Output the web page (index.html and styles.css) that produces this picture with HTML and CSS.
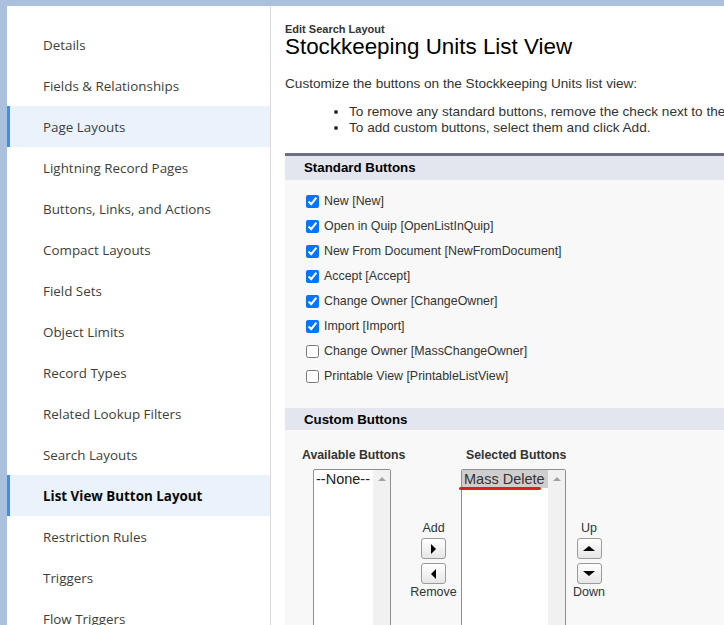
FILE: index.html
```html
<!DOCTYPE html>
<html lang="en">
<head>
    <meta charset="UTF-8">
    <title>Stockkeeping Units List View</title>
    <link rel="stylesheet" href="styles.css">
</head>
<body>
    <div class="app">
        <nav class="sidebar">
            <div class="nav-item">Details</div>
            <div class="nav-item">Fields &amp; Relationships</div>
            <div class="nav-item hover">Page Layouts</div>
            <div class="nav-item">Lightning Record Pages</div>
            <div class="nav-item">Buttons, Links, and Actions</div>
            <div class="nav-item">Compact Layouts</div>
            <div class="nav-item">Field Sets</div>
            <div class="nav-item">Object Limits</div>
            <div class="nav-item">Record Types</div>
            <div class="nav-item">Related Lookup Filters</div>
            <div class="nav-item">Search Layouts</div>
            <div class="nav-item active">List View Button Layout</div>
            <div class="nav-item">Restriction Rules</div>
            <div class="nav-item">Triggers</div>
            <div class="nav-item">Flow Triggers</div>
        </nav>

        <main class="content">
            <div class="page-type">Edit Search Layout</div>
            <h1 class="page-title">Stockkeeping Units List View</h1>
            <p class="intro">Customize the buttons on the Stockkeeping Units list view:</p>
            <ul class="hints">
                <li>To remove any standard buttons, remove the check next to the button.</li>
                <li>To add custom buttons, select them and click Add.</li>
            </ul>

            <section class="block">
                <h2 class="block-head">Standard Buttons</h2>
                <div class="block-body checks">
                    <label class="check"><input type="checkbox" checked> New [New]</label>
                    <label class="check"><input type="checkbox" checked> Open in Quip [OpenListInQuip]</label>
                    <label class="check"><input type="checkbox" checked> New From Document [NewFromDocument]</label>
                    <label class="check"><input type="checkbox" checked> Accept [Accept]</label>
                    <label class="check"><input type="checkbox" checked> Change Owner [ChangeOwner]</label>
                    <label class="check"><input type="checkbox" checked> Import [Import]</label>
                    <label class="check"><input type="checkbox"> Change Owner [MassChangeOwner]</label>
                    <label class="check"><input type="checkbox"> Printable View [PrintableListView]</label>
                </div>

                <h2 class="block-head custom">Custom Buttons</h2>
                <div class="block-body dual">
                    <div class="col col-available">
                        <div class="col-label">Available Buttons</div>
                        <div class="listbox">
                            <div class="options">
                                <div class="option">--None--</div>
                            </div>
                            <div class="scroll"><span class="scroll-up"></span></div>
                        </div>
                    </div>

                    <div class="col col-move">
                        <div class="btn-label">Add</div>
                        <div class="arrow-btn"><span class="tri right"></span></div>
                        <div class="arrow-btn"><span class="tri left"></span></div>
                        <div class="btn-label">Remove</div>
                    </div>

                    <div class="col col-selected">
                        <div class="col-label">Selected Buttons</div>
                        <div class="listbox wide">
                            <div class="options">
                                <div class="option selected">Mass Delete</div>
                            </div>
                            <div class="scroll"><span class="scroll-up"></span></div>
                            <span class="mark"></span>
                        </div>
                    </div>

                    <div class="col col-order">
                        <div class="btn-label">Up</div>
                        <div class="arrow-btn"><span class="tri up"></span></div>
                        <div class="arrow-btn"><span class="tri down"></span></div>
                        <div class="btn-label">Down</div>
                    </div>
                </div>
            </section>
        </main>
    </div>
</body>
</html>
```

FILE: styles.css
```css
html, body {
    height: 100%;
}

body {
    margin: 0;
    padding: 6px 0 0 7px;
    box-sizing: border-box;
    overflow: hidden;
    background: #aac0dc;
    font-family: 'Liberation Sans', Arial, sans-serif;
    color: #000;
}

.app {
    display: flex;
    height: 100%;
}

/* left navigation */
.sidebar {
    width: 263px;
    flex: none;
    padding-top: 18px;
    background: #fff;
    border-right: 1px solid #dddbda;
    font-family: 'Open Sans', 'Noto Sans', sans-serif;
    font-size: 13.4px;
    color: #3e3e3c;
}

.nav-item {
    height: 40px;
    padding: 1px 0 0 36px;
    line-height: 41px;
    white-space: nowrap;
}

.nav-item.hover,
.nav-item.active {
    background: #eaf2fc;
    box-shadow: inset 3px 0 0 #3d8eef;
}

.nav-item.active {
    font-weight: bold;
    color: #080707;
}

/* main panel */
.content {
    flex: 1;
    min-width: 0;
    overflow: hidden;
    background: #fff;
    padding: 17px 0 0 14px;
    font-size: 13.6px;
}

.page-type {
    font-size: 11px;
    font-weight: bold;
    line-height: 13px;
    color: #333;
}

.page-title {
    margin: 0;
    font-size: 22.4px;
    font-weight: normal;
    line-height: 22px;
    white-space: nowrap;
}

.intro {
    margin: 18px 0 0;
    line-height: 16px;
    color: #333;
}

.hints {
    margin: 12px 0 0;
    padding-left: 64px;
    line-height: 16px;
    color: #333;
    white-space: nowrap;
}

.block {
    margin-top: 17px;
    border-top: 3px solid #6b7085;
    background: #f8f8f8;
    width: 470px;
}

.block-head {
    margin: 0;
    height: 24px;
    line-height: 23px;
    padding-left: 19px;
    background: #e3e6ee;
    font-size: 13.3px;
    font-weight: bold;
}

.block-head.custom {
    height: 22px;
    line-height: 23px;
}

.checks {
    padding: 9px 0 19px 20px;
}

.check {
    display: flex;
    align-items: center;
    height: 25px;
    line-height: 25px;
    font-size: 12.4px;
    color: #333;
    white-space: nowrap;
}

.check input {
    width: 13px;
    height: 13px;
    margin: 0 5px 0 1px;
}

/* custom buttons picker */
.dual {
    display: flex;
    align-items: flex-start;
    padding: 17px 0 0 17px;
    height: 200px;
}

.col-label {
    font-size: 12.3px;
    font-weight: bold;
    line-height: 16px;
    color: #333;
    white-space: nowrap;
}

.col-available {
    width: 104px;
}

.col-selected {
    width: 105px;
}

.col-selected .col-label {
    padding-left: 5px;
}

.listbox {
    position: relative;
    display: flex;
    width: 76px;
    height: 180px;
    margin: 6px 0 0 11px;
    border: 1px solid #8f8f8f;
    border-radius: 2px;
    background: #fff;
}

.listbox.wide {
    width: 103px;
    margin-left: 0;
}

.options {
    flex: 1;
    min-width: 0;
}

.option {
    height: 18px;
    line-height: 18px;
    padding-left: 2px;
    font-size: 14.5px;
    color: #222;
    white-space: nowrap;
    overflow: hidden;
}

.option.selected {
    background: #cecece;
    color: #333;
}

.scroll {
    width: 17px;
    flex: none;
    background: #f1f1f1;
    display: flex;
    justify-content: center;
}

.scroll-up {
    margin-top: 7px;
    width: 0;
    height: 0;
    border-left: 4px solid transparent;
    border-right: 4px solid transparent;
    border-bottom: 4px solid #a3a3a3;
}

/* red annotation under the selected option */
.mark {
    position: absolute;
    left: -3px;
    top: 17px;
    width: 82px;
    height: 3px;
    border-radius: 2px;
    background: #e0201c;
}

.col-move,
.col-order {
    display: flex;
    flex-direction: column;
    align-items: center;
    padding-top: 74px;
}

.col-move {
    width: 55px;
}

.col-order {
    width: 46px;
}

.btn-label {
    font-size: 12.5px;
    line-height: 15px;
    color: #333;
}

.col-move .btn-label:first-child,
.col-order .btn-label:first-child {
    margin-bottom: 2px;
}

.arrow-btn {
    width: 23px;
    height: 19px;
    margin-bottom: 4px;
    border: 1px solid #9a9a9a;
    border-radius: 3px;
    background: linear-gradient(#ffffff, #e6e6e6);
    display: flex;
    align-items: center;
    justify-content: center;
}

.arrow-btn:nth-child(3) {
    margin-bottom: 1px;
}

.tri {
    width: 0;
    height: 0;
}

.tri.right {
    border-top: 5px solid transparent;
    border-bottom: 5px solid transparent;
    border-left: 5px solid #000;
}

.tri.left {
    border-top: 5px solid transparent;
    border-bottom: 5px solid transparent;
    border-right: 5px solid #000;
}

.tri.up {
    border-left: 6px solid transparent;
    border-right: 6px solid transparent;
    border-bottom: 5px solid #000;
}

.tri.down {
    border-left: 6px solid transparent;
    border-right: 6px solid transparent;
    border-top: 5px solid #000;
}
```
